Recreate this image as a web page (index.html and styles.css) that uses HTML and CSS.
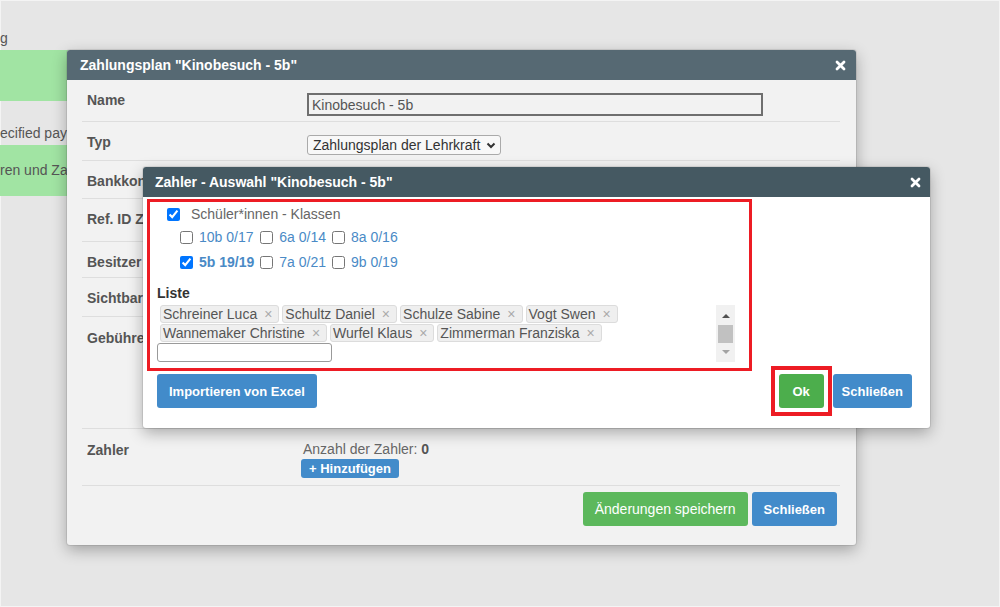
FILE: index.html
```html
<!DOCTYPE html>
<html lang="de">
<head>
    <meta charset="UTF-8">
    <meta name="viewport" content="width=device-width, initial-scale=1.0">
    <title>Zahlungsplan - Zahler Auswahl</title>
    <link rel="stylesheet" href="styles.css">
</head>
<body>
    <div class="screen">
        <!-- page behind the dialogs -->
        <div class="page">
            <div class="page-line">g</div>
            <div class="notice"></div>
            <div class="page-line page-line-gap">ecified payments</div>
            <div class="notice notice-text">ren und Zahlungen</div>
        </div>

        <!-- payment plan dialog -->
        <div class="dialog plan-dialog">
            <div class="dialog-header">
                <span class="dialog-title">Zahlungsplan "Kinobesuch - 5b"</span>
                <svg class="close-icon" width="11" height="11" viewBox="0 0 11 11"><path d="M2 2l7 7M9 2l-7 7" stroke="#fff" stroke-width="2.8" stroke-linecap="round"/></svg>
            </div>
            <div class="plan-body">
                <div class="row row-name">
                    <div class="row-label">Name</div>
                    <input class="text-input" type="text" value="Kinobesuch - 5b">
                </div>
                <div class="row row-type">
                    <div class="row-label">Typ</div>
                    <div class="select">
                        <span>Zahlungsplan der Lehrkraft</span>
                        <svg width="10" height="7" viewBox="0 0 10 7"><path d="M1.5 1.5l3.5 3.5 3.5-3.5" fill="none" stroke="#333" stroke-width="2"/></svg>
                    </div>
                </div>
                <div class="row row-bank"><div class="row-label">Bankkonto</div></div>
                <div class="row row-ref"><div class="row-label">Ref. ID Zahlungsplan</div></div>
                <div class="row row-owner"><div class="row-label">Besitzer</div></div>
                <div class="row row-visible"><div class="row-label">Sichtbarkeit</div></div>
                <div class="row row-fees"><div class="row-label">Gebühren</div></div>
                <div class="row row-payers">
                    <div class="row-label">Zahler</div>
                    <div class="row-value">
                        <div class="payer-count">Anzahl der Zahler: <b>0</b></div>
                        <button class="btn btn-blue btn-small">+ Hinzufügen</button>
                    </div>
                </div>
                <div class="plan-footer">
                    <button class="btn btn-green btn-save">Änderungen speichern</button>
                    <button class="btn btn-blue">Schließen</button>
                </div>
            </div>
        </div>

        <!-- payer selection dialog -->
        <div class="dialog payers-dialog">
            <div class="dialog-header">
                <span class="dialog-title">Zahler - Auswahl "Kinobesuch - 5b"</span>
                <svg class="close-icon" width="11" height="11" viewBox="0 0 11 11"><path d="M2 2l7 7M9 2l-7 7" stroke="#fff" stroke-width="2.8" stroke-linecap="round"/></svg>
            </div>
            <div class="highlight">
                <label class="group-head">
                    <input type="checkbox" checked>
                    <span>Schüler*innen - Klassen</span>
                </label>
                <div class="class-grid">
                    <label class="class-item"><input type="checkbox"><span>10b 0/17</span></label>
                    <label class="class-item"><input type="checkbox"><span>6a 0/14</span></label>
                    <label class="class-item"><input type="checkbox"><span>8a 0/16</span></label>
                    <label class="class-item is-full"><input type="checkbox" checked><span>5b 19/19</span></label>
                    <label class="class-item"><input type="checkbox"><span>7a 0/21</span></label>
                    <label class="class-item"><input type="checkbox"><span>9b 0/19</span></label>
                </div>

                <div class="list-label">Liste</div>
                <div class="list-box">
                    <div class="tags">
                        <span class="tag">Schreiner Luca <span class="tag-remove">×</span></span>
                        <span class="tag">Schultz Daniel <span class="tag-remove">×</span></span>
                        <span class="tag">Schulze Sabine <span class="tag-remove">×</span></span>
                        <span class="tag">Vogt Swen <span class="tag-remove">×</span></span>
                        <span class="tag">Wannemaker Christine <span class="tag-remove">×</span></span>
                        <span class="tag">Wurfel Klaus <span class="tag-remove">×</span></span>
                        <span class="tag">Zimmerman Franziska <span class="tag-remove">×</span></span>
                        <input class="tag-input" type="text">
                    </div>
                    <div class="scrollbar">
                        <span class="arrow-up"></span>
                        <span class="thumb"></span>
                        <span class="arrow-down"></span>
                    </div>
                </div>
                <div class="list-count">Anzahl: 19</div>
            </div>
            <div class="payers-footer">
                <button class="btn btn-blue">Importieren von Excel</button>
                <div class="footer-right">
                    <span class="mark"><button class="btn btn-ok">Ok</button></span>
                    <button class="btn btn-blue btn-compact">Schließen</button>
                </div>
            </div>
        </div>
    </div>
</body>
</html>
```

FILE: styles.css
```css
* {
    margin: 0;
    padding: 0;
    box-sizing: border-box;
}

body {
    font-family: "Liberation Sans", Arial, sans-serif;
    font-size: 14px;
    color: #555;
    background-color: #e6e6e6;
}

.screen {
    position: relative;
    width: 1000px;
    height: 607px;
    overflow: hidden;
    box-shadow: inset 0 0 0 1px #f4f4f4;
}

/* page behind */
.page {
    width: 205px;
    padding-top: 29px;
}

.page-line {
    height: 18px;
    line-height: 18px;
    white-space: nowrap;
    overflow: hidden;
}

.page-line-gap {
    margin-top: 23px;
}

.notice {
    height: 51px;
    margin-top: 3px;
    background-color: #a1e4a3;
}

.notice-text {
    padding-top: 16px;
    line-height: 18px;
    white-space: nowrap;
    overflow: hidden;
}

/* dialogs */
.dialog {
    position: absolute;
    border-radius: 3px;
    overflow: hidden;
    box-shadow: 0 0 0 1px rgba(0,0,0,0.08), 0 5px 15px rgba(0,0,0,0.3);
}

.dialog-header {
    height: 30px;
    display: flex;
    align-items: center;
    justify-content: space-between;
    padding: 0 10px 0 13px;
    color: #fff;
    font-weight: bold;
    white-space: nowrap;
}

.plan-dialog {
    left: 67px;
    top: 50px;
    width: 789px;
    height: 495px;
    background-color: #f2f2f2;
}

.plan-dialog .dialog-header {
    background-color: #566973;
}

.plan-body {
    padding: 0 16px 0 15px;
}

.row {
    display: flex;
    align-items: flex-start;
    padding: 10px 0 0 5px;
    border-bottom: 1px solid #dedede;
}

.row-label {
    width: 216px;
    flex-shrink: 0;
    line-height: 20px;
    font-weight: bold;
    white-space: nowrap;
}

.row-name { height: 42px; }
.row-type { height: 39px; }
.row-bank { height: 38px; }
.row-ref { height: 43px; }
.row-owner { height: 36px; }
.row-visible { height: 39px; }
.row-fees { height: 112px; padding-top: 11px; }
.row-payers { height: 57px; padding-top: 11px; }

.text-input {
    width: 456px;
    height: 23px;
    margin: 3px 0 0 4px;
    padding: 0 3px;
    border: 2px solid #6f6f6f;
    background-color: #f2f2f2;
    font: inherit;
    color: #555;
}

.select {
    display: inline-flex;
    align-items: center;
    gap: 6px;
    height: 20px;
    margin: 3px 0 0 4px;
    padding: 0 4px 0 5px;
    border: 1px solid #aaa;
    border-radius: 3px;
    background-color: #f8f8f8;
    color: #333;
    white-space: nowrap;
}

.row-value {
    margin-top: 1px;
}

.payer-count {
    line-height: 17px;
    color: #666;
}

.payer-count b {
    color: #555;
}

.plan-footer {
    display: flex;
    justify-content: flex-end;
    gap: 4px;
    padding: 6px 3px 0 0;
}

/* buttons */
.btn {
    height: 34px;
    padding: 0 12px;
    border: none;
    border-radius: 3px;
    font-family: "Liberation Sans", Arial, sans-serif;
    font-size: 13px;
    font-weight: bold;
    color: #fff;
    white-space: nowrap;
}

.btn-green {
    background-color: #5cb85c;
}

.btn-save {
    font-size: 14px;
    font-weight: normal;
}

.btn-blue {
    background-color: #428bca;
}

.btn-small {
    height: 19px;
    margin: 1px 0 0 -2px;
    padding: 0 8px;
}

.btn-compact {
    padding: 0 9px;
}

.btn-ok {
    display: block;
    width: 45px;
    padding: 0;
    background-color: #4cae4c;
}

/* red annotation frame round the Ok button */
.mark {
    display: block;
    padding: 4px;
    border: 4px solid #ed1c24;
    background-color: #fff;
}

/* payer selection */
.payers-dialog {
    left: 143px;
    top: 167px;
    width: 787px;
    height: 261px;
    background-color: #fff;
}

.payers-dialog .dialog-header {
    background-color: #455962;
    padding: 0 9px 0 12px;
}

.highlight {
    width: 605px;
    height: 172px;
    margin: 2px 0 0 4px;
    padding: 2px 0 0 7px;
    border: 3px solid #ed1c24;
    overflow: hidden;
}

input[type="checkbox"] {
    width: 13px;
    height: 13px;
    margin: 0;
    flex-shrink: 0;
}

.group-head {
    display: flex;
    align-items: center;
    gap: 11px;
    height: 20px;
    padding-left: 10px;
    color: #666;
}

.class-grid {
    display: grid;
    grid-template-columns: repeat(3, auto);
    justify-content: start;
    column-gap: 6px;
    row-gap: 3px;
    margin-top: 2px;
    padding-left: 23px;
}

.class-item {
    display: flex;
    align-items: center;
    gap: 6px;
    height: 22px;
    color: #4a8ac6;
    white-space: nowrap;
}

.class-item.is-full {
    font-weight: bold;
}

.list-label {
    margin-top: 10px;
    line-height: 20px;
    font-weight: bold;
    color: #333;
}

.list-box {
    display: flex;
    align-items: flex-start;
}

.tags {
    width: 559px;
    display: flex;
    flex-wrap: wrap;
    row-gap: 1px;
    padding-top: 2px;
}

.tag {
    display: flex;
    align-items: center;
    gap: 7px;
    height: 18px;
    margin-left: 3px;
    padding: 0 6px 0 2px;
    border: 1px solid #dcdcdc;
    border-radius: 3px;
    background-color: #efefef;
    line-height: 16px;
    white-space: nowrap;
}

.tag-remove {
    color: #aaa;
}

.tag-input {
    width: 175px;
    height: 19px;
    border: 1px solid #9a9a9a;
    border-radius: 3px;
    background-color: #fff;
}

.scrollbar {
    width: 19px;
    height: 57px;
    margin-top: 2px;
    padding-top: 9px;
    display: flex;
    flex-direction: column;
    align-items: center;
    background-color: #f1f1f1;
}

.arrow-up {
    border-left: 4px solid transparent;
    border-right: 4px solid transparent;
    border-bottom: 4px solid #505050;
}

.thumb {
    width: 15px;
    height: 18px;
    margin-top: 7px;
    background-color: #c1c1c1;
}

.arrow-down {
    margin-top: 7px;
    border-left: 4px solid transparent;
    border-right: 4px solid transparent;
    border-top: 4px solid #a3a3a3;
}

.list-count {
    margin-top: 4px;
    line-height: 16px;
    font-size: 13px;
}

.payers-footer {
    display: flex;
    justify-content: space-between;
    align-items: center;
    margin-top: -5px;
    padding: 0 18px 0 14px;
}

.footer-right {
    display: flex;
    align-items: center;
    gap: 1px;
}
```
